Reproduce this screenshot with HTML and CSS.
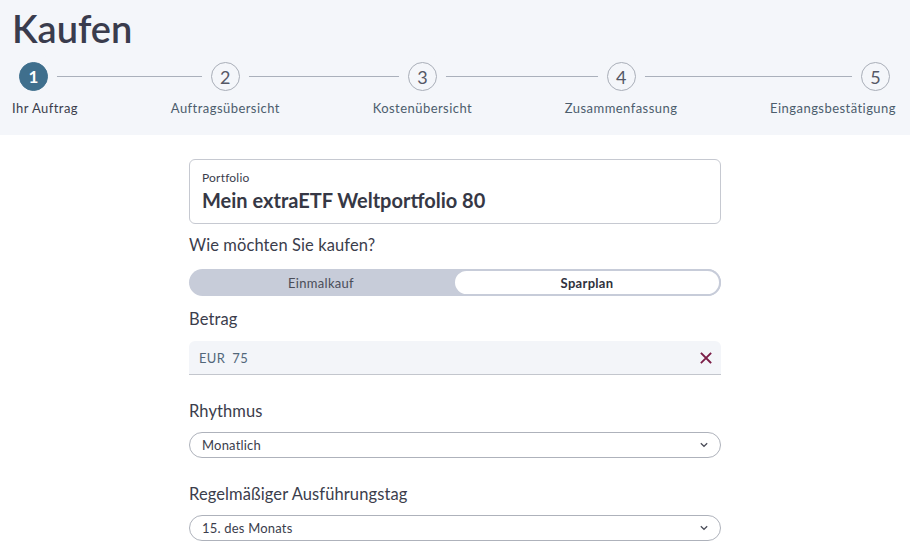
FILE: index.html
```html
<!DOCTYPE html>
<html lang="de">
<head>
<meta charset="utf-8">
<title>Kaufen</title>
<link rel="stylesheet" href="styles.css">
</head>
<body>
<header class="head">
  <h1 class="title">Kaufen</h1>
  <ol class="steps">
    <li class="step step-first">
      <span class="dot dot-active">1</span>
      <span class="step-label">Ihr Auftrag</span>
    </li>
    <li class="step">
      <span class="dot">2</span>
      <span class="step-label">Auftragsübersicht</span>
    </li>
    <li class="step">
      <span class="dot">3</span>
      <span class="step-label">Kostenübersicht</span>
    </li>
    <li class="step">
      <span class="dot">4</span>
      <span class="step-label">Zusammenfassung</span>
    </li>
    <li class="step step-last">
      <span class="dot">5</span>
      <span class="step-label">Eingangsbestätigung</span>
    </li>
  </ol>
</header>
<main class="form">
  <div class="portfolio">
    <div class="portfolio-label">Portfolio</div>
    <div class="portfolio-value">Mein extraETF Weltportfolio 80</div>
  </div>
  <div class="q">Wie möchten Sie kaufen?</div>
  <div class="toggle">
    <span class="toggle-opt">Einmalkauf</span>
    <span class="toggle-opt toggle-on">Sparplan</span>
  </div>
  <div class="q">Betrag</div>
  <div class="amount">
    <span class="amount-text">EUR&nbsp;&nbsp;75</span>
    <svg class="clear" width="12" height="12" viewBox="0 0 12 12"><path d="M1.5 1.5 L10.5 10.5 M10.5 1.5 L1.5 10.5" stroke="#7b1d47" stroke-width="1.8" fill="none" stroke-linecap="square"/></svg>
  </div>
  <div class="q q-gap">Rhythmus</div>
  <div class="select">
    <span>Monatlich</span>
    <svg class="chev" width="10" height="6" viewBox="0 0 10 6"><path d="M1.8 1.2 L5 4.3 L8.2 1.2" stroke="#4a4c58" stroke-width="1.2" fill="none"/></svg>
  </div>
  <div class="q q-gap">Regelmäßiger Ausführungstag</div>
  <div class="select">
    <span>15. des Monats</span>
    <svg class="chev" width="10" height="6" viewBox="0 0 10 6"><path d="M1.8 1.2 L5 4.3 L8.2 1.2" stroke="#4a4c58" stroke-width="1.2" fill="none"/></svg>
  </div>
</main>
</body>
</html>
```
FILE: styles.css
```css
* { box-sizing: border-box; }
html, body { margin: 0; padding: 0; }
body {
  font-family: Lato, "Open Sans", "DejaVu Sans", sans-serif;
  color: #3b3d4c;
  background: #ffffff;
}
.head {
  background: #f4f6fa;
  padding: 5px 14px 18px 12px;
}
.title {
  margin: 0;
  font-size: 38px;
  line-height: 46px;
  font-weight: 600;
  color: #3a3c4d;
}
.steps {
  list-style: none;
  margin: 12px 0 0 0;
  padding: 0;
  display: flex;
  justify-content: space-between;
  position: relative;
}
.steps::before {
  content: "";
  position: absolute;
  left: 10px;
  right: 10px;
  top: 13px;
  border-top: 1px solid #aab0bb;
  z-index: 0;
}
.step {
  display: flex;
  flex-direction: column;
  align-items: center;
  gap: 8px;
  position: relative;
  z-index: 1;
}
.step-first { align-items: flex-start; }
.step-first .dot { margin-left: 7px; }
.step-last { align-items: flex-end; }
.step-last .dot { margin-right: 6px; }
.dot {
  width: 29px;
  height: 29px;
  border-radius: 50%;
  border: 1.5px solid #a9aeb8;
  background: #f4f6fa;
  box-shadow: 0 0 0 9px #f4f6fa;
  display: flex;
  align-items: center;
  justify-content: center;
  font-size: 18px;
  color: #555866;
  margin-top: -1px;
}
.dot-active {
  background: #3f6f8d;
  border-color: #3f6f8d;
  color: #ffffff;
  font-weight: 700;
  font-size: 17px;
}
.step-label {
  font-size: 13px;
  line-height: 18px;
  letter-spacing: 0.45px;
  color: #4c5d6d;
  white-space: nowrap;
}
.step-first .step-label { color: #3b3d4c; }
.form {
  width: 532px;
  margin: 0 auto;
  padding-top: 24px;
}
.portfolio {
  border: 1px solid #c6c9d1;
  border-radius: 6px;
  padding: 10px 12px 11px 12px;
}
.portfolio-label {
  font-size: 12px;
  line-height: 16px;
  letter-spacing: 0.2px;
  color: #3b3d4c;
}
.portfolio-value {
  margin-top: 2px;
  font-size: 20px;
  line-height: 24px;
  font-weight: 700;
  color: #363845;
}
.q {
  margin-top: 11px;
  font-size: 16.5px;
  line-height: 20px;
  letter-spacing: 0.1px;
  color: #3b3d4c;
}
.toggle {
  margin-top: 14px;
  height: 27px;
  border-radius: 14px;
  background: #c7ccd9;
  display: flex;
}
.toggle + .q { margin-top: 13px; }
.toggle-opt {
  flex: 1;
  display: flex;
  align-items: center;
  justify-content: center;
  font-size: 13px;
  letter-spacing: 0.3px;
  color: #4a4c58;
  border-radius: 14px;
}
.toggle-on {
  background: #ffffff;
  border: 2px solid #c7ccd9;
  color: #2f313c;
  font-weight: 700;
}
.amount {
  margin-top: 12px;
  height: 34px;
  background: #f3f5f9;
  border-bottom: 1px solid #c3c6cd;
  border-radius: 6px 6px 0 0;
  display: flex;
  align-items: center;
  justify-content: space-between;
  padding: 0 9px 0 10px;
}
.amount-text {
  font-size: 13px;
  letter-spacing: 0.3px;
  color: #52677a;
}
.q-gap { margin-top: 26px; }
.select {
  margin-top: 11px;
  height: 26px;
  border: 1px solid #aeb2bb;
  border-radius: 13px;
  display: flex;
  align-items: center;
  justify-content: space-between;
  padding: 0 11px 0 12px;
  font-size: 13px;
  letter-spacing: 0.2px;
  color: #3b3d4c;
}
```
